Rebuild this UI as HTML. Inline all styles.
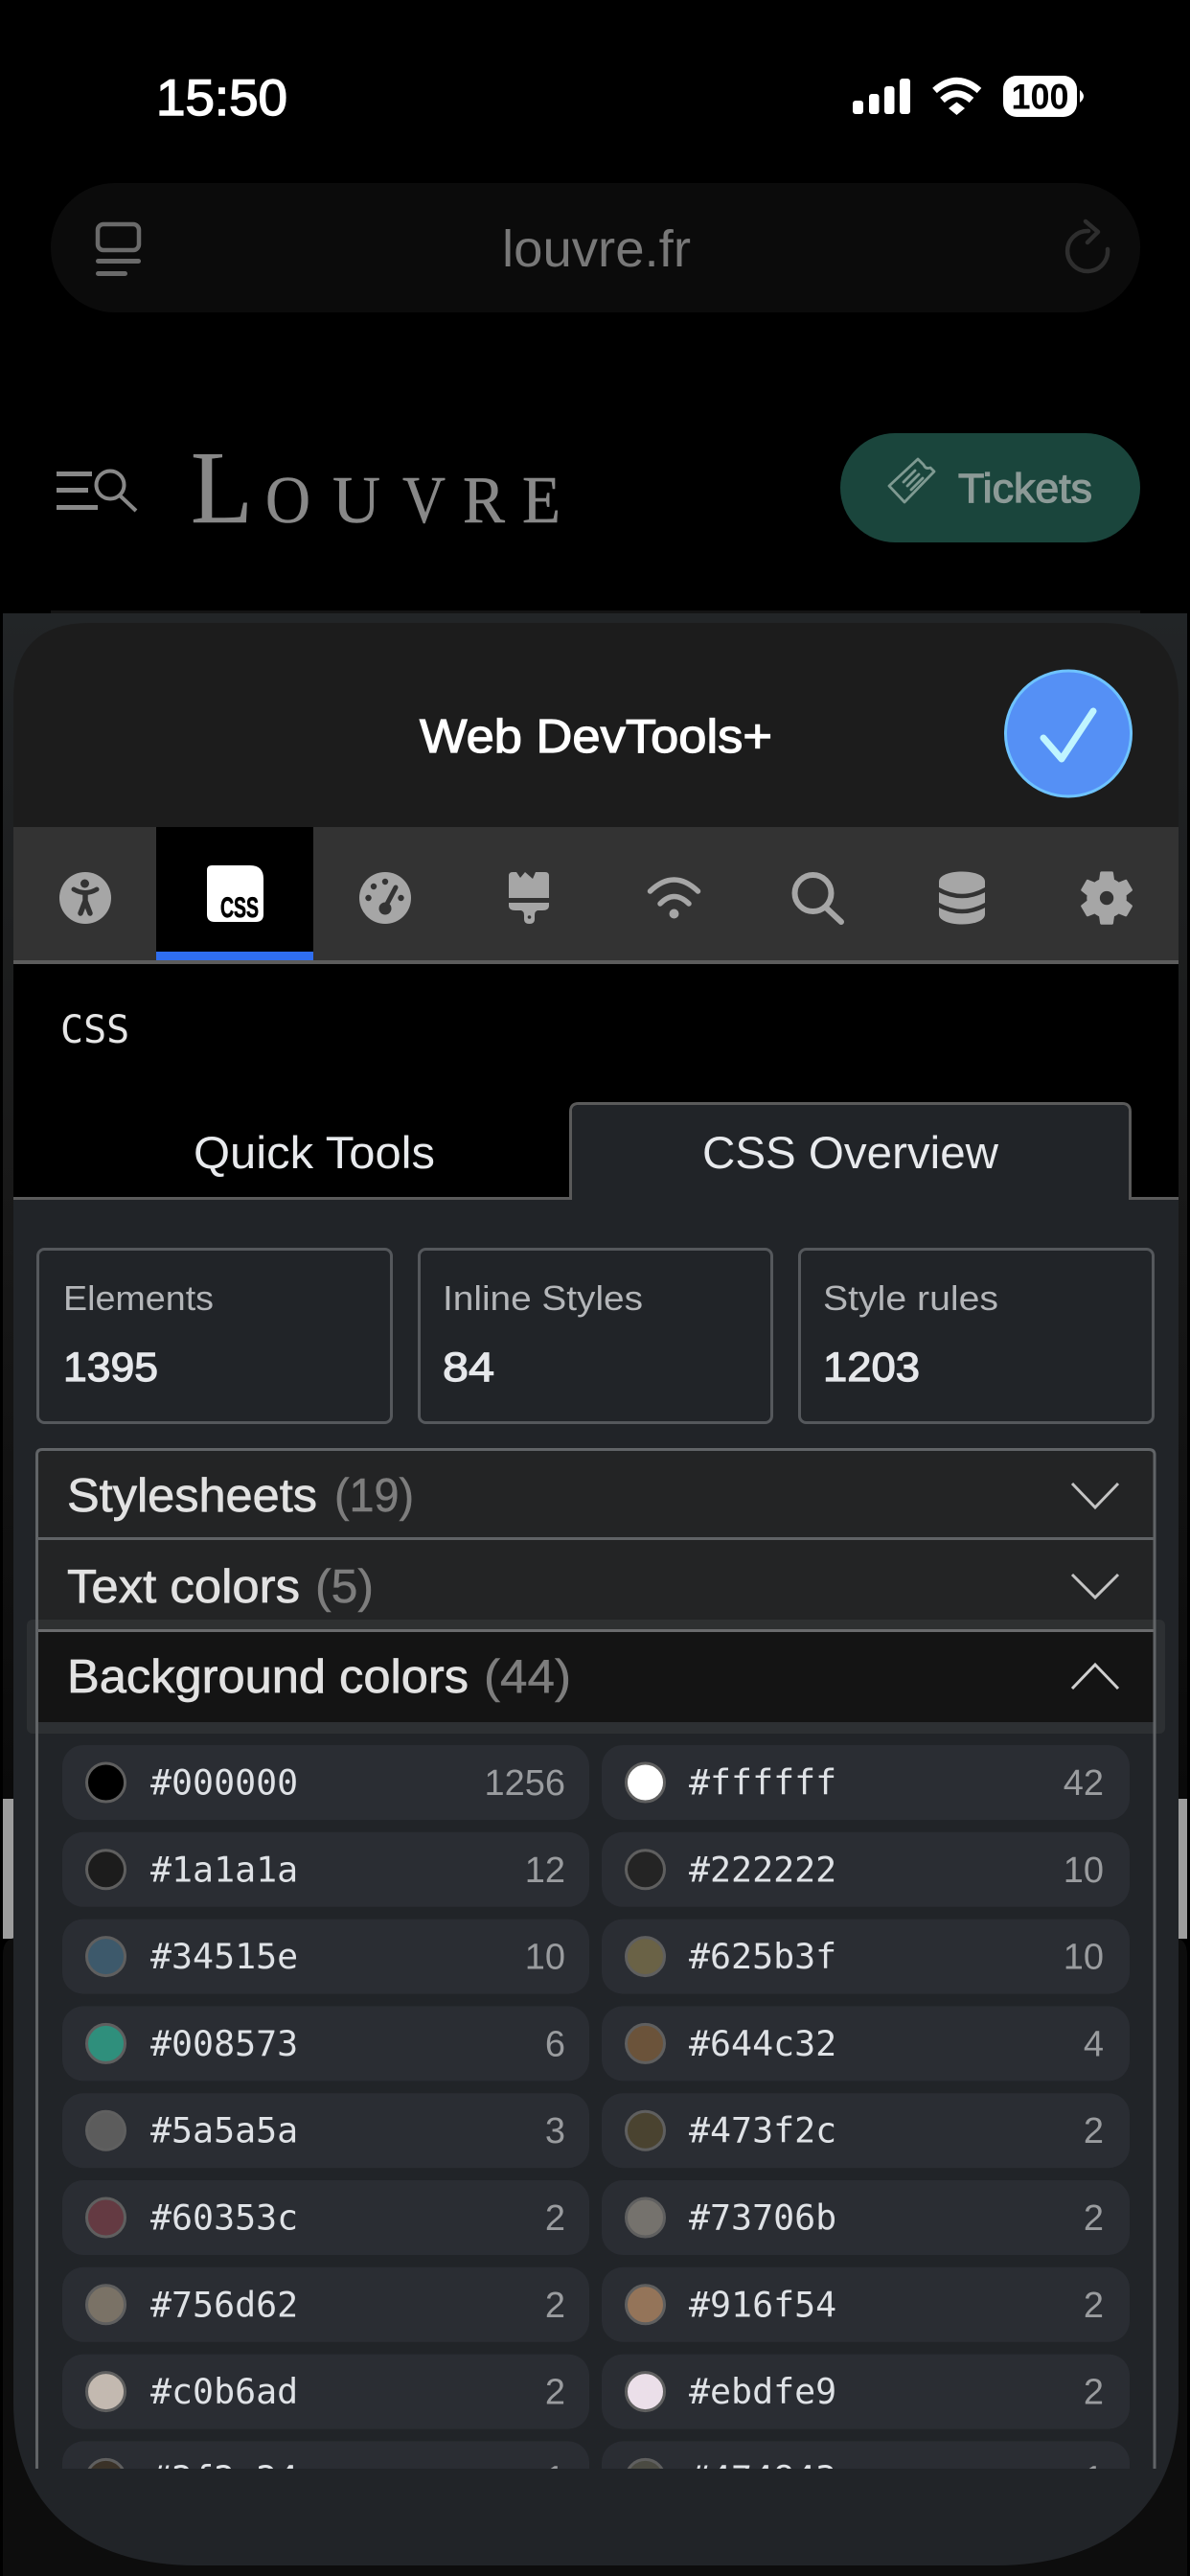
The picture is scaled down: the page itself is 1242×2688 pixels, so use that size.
<!DOCTYPE html>
<html><head><meta charset="utf-8"><title>Web DevTools+</title>
<style>
html,body{margin:0;padding:0;background:#000;width:1242px;height:2688px;overflow:hidden}
svg{display:block}
.s{font-family:"Liberation Sans",sans-serif}
.m{font-family:"DejaVu Sans Mono","Liberation Mono",monospace;font-size:36.6px;fill:#dfe2e6}
.c{font-family:"Liberation Sans",sans-serif;font-size:38px;fill:#9a9c9f;text-anchor:end}
.h{font-family:"Liberation Sans",sans-serif;font-size:49px;fill:#e2e2e2;stroke:#e2e2e2;stroke-width:.7}
.n{font-family:"Liberation Sans",sans-serif;font-size:49px;fill:#7d7d7d;stroke:#7d7d7d;stroke-width:.5}
.l{font-family:"Liberation Sans",sans-serif;font-size:36px;fill:#b4b6b9}
.v{font-family:"Liberation Sans",sans-serif;font-size:43px;fill:#e6e8eb;stroke:#e6e8eb;stroke-width:1.2}
.g{font-family:"Liberation Serif",serif;fill:#888;stroke:#888;stroke-width:.5}
</style></head><body>
<svg xmlns="http://www.w3.org/2000/svg" width="1242" height="2688" viewBox="0 0 1242 2688">
<defs>
<linearGradient id="edge" x1="0" y1="640" x2="0" y2="1877" gradientUnits="userSpaceOnUse"><stop offset="0" stop-color="#222527"/><stop offset=".45" stop-color="#1a1a1a"/><stop offset="1" stop-color="#0a0a0a"/></linearGradient>
<clipPath id="sheet"><path d="M94 650H1150Q1230 650 1230 730V2507C1230 2620 1150 2677 1040 2677H204C94 2677 14 2620 14 2507V730Q14 650 94 650Z"/></clipPath>
<clipPath id="rows"><rect x="40" y="1800" width="1164" height="776"/></clipPath>
</defs>
<rect width="1242" height="2688" fill="#000"/>

<!-- status bar -->
<text class="s" x="163" y="120" font-size="53" fill="#fff" stroke="#fff" stroke-width="1.500" textLength="137" lengthAdjust="spacingAndGlyphs">15:50</text>
<g fill="#fff">
<rect x="890" y="105" width="11" height="14" rx="3"/><rect x="907" y="98" width="10.500" height="21" rx="3"/><rect x="923" y="90" width="10.500" height="29" rx="3"/><rect x="939" y="82" width="11" height="37" rx="3"/>
<path d="M990 113L998.500 106.500L1007 113L998.500 120Z"/>
<rect x="1047" y="79" width="77" height="43" rx="14"/>
<path d="M1127 94Q1131 97 1131 100.500Q1131 104 1127 107Z"/>
</g>
<g fill="none" stroke="#fff" stroke-width="7"><path d="M975.500 94.500Q998.500 74 1022 94.500"/><path d="M983.500 104.500Q998.500 91 1014 104.500"/></g>
<text class="s" x="1085.500" y="113.500" font-size="37" font-weight="bold" fill="#000" text-anchor="middle" textLength="60" lengthAdjust="spacingAndGlyphs">100</text>

<!-- url bar -->
<rect x="53" y="191" width="1137" height="135" rx="67" fill="#0b0b0b"/>
<rect x="102" y="234" width="43" height="27" rx="6" fill="none" stroke="#6a6a6a" stroke-width="4.500"/>
<rect x="100" y="270" width="47" height="5" rx="2.500" fill="#6a6a6a"/><rect x="100" y="283" width="33" height="5" rx="2.500" fill="#6a6a6a"/>
<text class="s" x="524" y="278" font-size="54" fill="#787878" textLength="197" lengthAdjust="spacingAndGlyphs">louvre.fr</text>
<g fill="none" stroke="#2e2e2e" stroke-width="4.500" stroke-linecap="round" stroke-linejoin="round"><path d="M1156 260A21 21 0 1 1 1136 241"/><path d="M1133 231L1146 242L1135 253"/></g>

<!-- site header -->
<g fill="#888"><rect x="59" y="492" width="37" height="5"/><rect x="59" y="509" width="33" height="5"/><rect x="59" y="527" width="43" height="5"/></g>
<g fill="none" stroke="#888" stroke-width="4"><circle cx="115" cy="506" r="14.500"/><path d="M125 517L142 533"/></g>
<g class="g">
<text x="199" y="545" font-size="108" textLength="65" lengthAdjust="spacingAndGlyphs">L</text>
<text x="277" y="545" font-size="70" textLength="47" lengthAdjust="spacingAndGlyphs">O</text>
<text x="347" y="545" font-size="70" textLength="50" lengthAdjust="spacingAndGlyphs">U</text>
<text x="420" y="545" font-size="70" textLength="45" lengthAdjust="spacingAndGlyphs">V</text>
<text x="483" y="545" font-size="70" textLength="44" lengthAdjust="spacingAndGlyphs">R</text>
<text x="545" y="545" font-size="70" textLength="40" lengthAdjust="spacingAndGlyphs">E</text>
</g>
<rect x="877" y="452" width="313" height="114" rx="57" fill="#1a453c"/>
<g fill="none" stroke="#7f9a92" stroke-width="2.800" stroke-linejoin="round" stroke-linecap="round"><path d="M928 507L958 479L964 485Q966 490 971 488L975 492L944 524Z"/><path d="M943 503L955 491M947 507L959 495M951 511L963 499"/></g>
<text class="s" x="1000" y="524" font-size="43" fill="#8c9a97" stroke="#8c9a97" stroke-width="1.200" textLength="140" lengthAdjust="spacingAndGlyphs">Tickets</text>

<!-- behind sheet -->
<rect x="53" y="637" width="1137" height="3" fill="#141414"/>
<rect x="3" y="640" width="1236" height="1382" fill="url(#edge)"/>
<rect x="3" y="1877" width="11" height="146" fill="#9c9c9c"/>
<rect x="1230" y="1877" width="9" height="146" fill="#9c9c9c"/>
<path d="M3 2688V2040Q3 2022 18 2022H1224Q1239 2022 1239 2040V2688Z" fill="#0d0d0d"/>

<!-- sheet -->
<g clip-path="url(#sheet)">
<rect x="14" y="650" width="1216" height="2027" fill="#212428"/>
<rect x="14" y="650" width="1216" height="213" fill="#1c1c1c"/>
<rect x="14" y="863" width="1216" height="139" fill="#333"/>
<rect x="14" y="1002" width="1216" height="4" fill="#5c5c5c"/>
<rect x="14" y="1006" width="1216" height="244" fill="#000"/>
<rect x="163" y="863" width="164" height="130" fill="#000"/>
<rect x="163" y="993" width="164" height="9" fill="#2f6ef0"/>
</g>

<!-- head -->
<text class="s" x="438" y="785" font-size="49" fill="#fff" stroke="#fff" stroke-width="1.200" textLength="368" lengthAdjust="spacingAndGlyphs">Web DevTools+</text>
<circle cx="1115" cy="765.500" r="65.500" fill="#5590f5" stroke="#6ec3ff" stroke-width="3"/>
<path d="M1089 770L1108 792L1141 742" fill="none" stroke="#c0f5ff" stroke-width="7" stroke-linecap="round" stroke-linejoin="round"/>

<!-- tab icons -->
<circle cx="89" cy="937" r="27" fill="#a6a6a6"/>
<circle cx="88.500" cy="922" r="4.500" fill="#333"/>
<path d="M77 928Q89 935 101 928" fill="none" stroke="#333" stroke-width="5" stroke-linecap="round"/>
<path d="M89 932V941M89 940L84 953M89 940L94 953" fill="none" stroke="#333" stroke-width="5.500" stroke-linecap="round"/>

<path d="M216 908Q216 903 221 903H261Q275 903 275 917V954Q275 962 267 962H224Q216 962 216 954Z" fill="#fff"/>
<text class="s" x="230" y="957" font-size="30" font-weight="bold" fill="#000" stroke="#000" stroke-width=".7" textLength="40" lengthAdjust="spacingAndGlyphs">CSS</text>

<circle cx="402" cy="937" r="27" fill="#a6a6a6"/>
<g fill="#333"><circle cx="390" cy="925" r="3.200"/><circle cx="402" cy="920" r="3.200"/><circle cx="384.500" cy="937" r="3.200"/><circle cx="418.500" cy="937" r="3.200"/><circle cx="402" cy="948" r="6.500"/></g>
<path d="M403 945L413 926" stroke="#333" stroke-width="5" stroke-linecap="round"/>

<g fill="#a6a6a6">
<path d="M531 914Q531 910 535 910H539L543 916L548 910L556 917L559 910H569Q573 910 573 914V937H531Z"/>
<path d="M531 942H573V945Q573 950 566 950H561Q558 951 558 955V959Q558 964 552.500 964Q547 964 547 959V955Q547 951 544 950H538Q531 950 531 945Z"/>
</g>
<circle cx="552.500" cy="957" r="1.800" fill="#333"/>

<g fill="none" stroke="#a6a6a6" stroke-width="5.500" stroke-linecap="round"><path d="M678.500 930Q703.500 906 728.500 930"/><path d="M689 943Q703.500 928 719 943"/></g>
<circle cx="703.500" cy="953.500" r="5" fill="#a6a6a6"/>

<g fill="none" stroke="#a6a6a6" stroke-width="6" stroke-linecap="round"><circle cx="848.500" cy="932" r="19"/><path d="M862 947L878 962"/></g>

<path d="M980 920C980 906 1028 906 1028 920V954C1028 968 980 968 980 954Z" fill="#a6a6a6"/>
<path d="M979 928Q1004 942 1029 928M979 944Q1004 958 1029 944" fill="none" stroke="#333" stroke-width="4.500"/>

<g transform="translate(1120.500 902.500) scale(2.880 2.880)"><path fill="#a6a6a6" d="M19.140 12.940c.040-.300.060-.610.060-.940 0-.320-.020-.640-.070-.940l2.030-1.580a.490.490 0 0 0 .120-.610l-1.920-3.320a.488.488 0 0 0-.590-.220l-2.390.960c-.500-.380-1.030-.700-1.620-.940l-.360-2.540a.484.484 0 0 0-.480-.410h-3.840c-.240 0-.430.170-.470.410l-.360 2.540c-.590.240-1.130.570-1.620.940l-2.390-.960c-.220-.080-.470 0-.590.220L2.740 8.870c-.120.210-.080.470.120.610l2.030 1.580c-.050.300-.090.630-.090.940s.020.640.070.940l-2.030 1.580a.490.490 0 0 0-.120.610l1.920 3.320c.120.220.370.290.590.220l2.390-.960c.500.380 1.030.700 1.620.940l.360 2.540c.050.240.240.410.480.410h3.840c.240 0 .440-.170.470-.410l.360-2.540c.590-.240 1.130-.560 1.620-.940l2.390.960c.220.080.470 0 .590-.220l1.920-3.320c.120-.220.070-.470-.120-.610l-2.010-1.580z"/><circle cx="12" cy="12" r="2.500" fill="#333"/></g>

<!-- section title -->
<text x="63" y="1088" font-family="DejaVu Sans Mono, monospace" font-size="40" fill="#e6e6e6">CSS</text>

<!-- tabs -->
<rect x="596" y="1248" width="583" height="6" fill="#212428"/>
<path d="M14 1250.500H595.500V1160Q595.500 1151.500 604 1151.500H1171Q1179.500 1151.500 1179.500 1160V1250.500H1230" fill="none" stroke="#5a5a5a" stroke-width="3"/>
<path d="M597 1250V1160Q597 1153 604 1153H1171Q1178 1153 1178 1160V1250Z" fill="#212428"/>
<text class="s" x="202" y="1219" font-size="47.500" fill="#e8eaed" textLength="252" lengthAdjust="spacingAndGlyphs">Quick Tools</text>
<text class="s" x="733" y="1219" font-size="47.500" fill="#e8eaed" textLength="309" lengthAdjust="spacingAndGlyphs">CSS Overview</text>

<!-- stats -->
<g fill="none" stroke="#55585c" stroke-width="3">
<rect x="39.500" y="1303.500" width="369" height="181" rx="7"/>
<rect x="437.500" y="1303.500" width="368" height="181" rx="7"/>
<rect x="834.500" y="1303.500" width="369" height="181" rx="7"/>
</g>
<text class="l" x="66" y="1367" textLength="157" lengthAdjust="spacingAndGlyphs">Elements</text>
<text class="l" x="462" y="1367" textLength="209" lengthAdjust="spacingAndGlyphs">Inline Styles</text>
<text class="l" x="859" y="1367" textLength="183" lengthAdjust="spacingAndGlyphs">Style rules</text>
<text class="v" x="66" y="1441" textLength="99" lengthAdjust="spacingAndGlyphs">1395</text>
<text class="v" x="462" y="1441" textLength="54" lengthAdjust="spacingAndGlyphs">84</text>
<text class="v" x="859" y="1441" textLength="101" lengthAdjust="spacingAndGlyphs">1203</text>

<!-- accordion -->
<path d="M38.500 2576V1518Q38.500 1512.500 44 1512.500H1199Q1204.500 1512.500 1204.500 1518V1700H38.500Z" fill="#232425"/>
<path d="M38.500 2576V1518Q38.500 1512.500 44 1512.500H1199Q1205 1512.500 1205 1518V2576" fill="none" stroke="#616467" stroke-width="3"/>
<rect x="40" y="1604" width="1164" height="3" fill="#5f6265"/>
<text class="h" x="70" y="1577" textLength="261" lengthAdjust="spacingAndGlyphs">Stylesheets</text>
<text class="n" x="349" y="1577" textLength="83" lengthAdjust="spacingAndGlyphs">(19)</text>
<path d="M1119 1548L1143 1573L1167 1548" fill="none" stroke="#c4c4c4" stroke-width="3"/>
<text class="h" x="70" y="1672" textLength="243" lengthAdjust="spacingAndGlyphs">Text colors</text>
<text class="n" x="329" y="1672" textLength="61" lengthAdjust="spacingAndGlyphs">(5)</text>
<path d="M1119 1643L1143 1667L1167 1643" fill="none" stroke="#c4c4c4" stroke-width="3"/>

<rect x="28" y="1690" width="1188" height="119" rx="6" fill="#36383b" fill-opacity=".6"/>
<rect x="40" y="1700" width="1164" height="3" fill="#6a6b6d"/>
<rect x="40" y="1703" width="1164" height="94" fill="#141414"/>
<path d="M38.500 1690V2576M1205 1690V2576" stroke="#616467" stroke-width="3" fill="none"/>
<text class="h" x="70" y="1766" textLength="419" lengthAdjust="spacingAndGlyphs">Background colors</text>
<text class="n" x="505" y="1766" textLength="91" lengthAdjust="spacingAndGlyphs">(44)</text>
<path d="M1119 1762L1143 1737L1167 1762" fill="none" stroke="#d0d0d0" stroke-width="3"/>

<!-- colour rows -->
<g clip-path="url(#rows)">
<g fill="#2a2d33">
<rect x="65" y="1821" width="550" height="78" rx="22"/><rect x="628" y="1821" width="551" height="78" rx="22"/>
<rect x="65" y="1911.800" width="550" height="78" rx="22"/><rect x="628" y="1911.800" width="551" height="78" rx="22"/>
<rect x="65" y="2002.600" width="550" height="78" rx="22"/><rect x="628" y="2002.600" width="551" height="78" rx="22"/>
<rect x="65" y="2093.400" width="550" height="78" rx="22"/><rect x="628" y="2093.400" width="551" height="78" rx="22"/>
<rect x="65" y="2184.200" width="550" height="78" rx="22"/><rect x="628" y="2184.200" width="551" height="78" rx="22"/>
<rect x="65" y="2275" width="550" height="78" rx="22"/><rect x="628" y="2275" width="551" height="78" rx="22"/>
<rect x="65" y="2365.800" width="550" height="78" rx="22"/><rect x="628" y="2365.800" width="551" height="78" rx="22"/>
<rect x="65" y="2456.600" width="550" height="78" rx="22"/><rect x="628" y="2456.600" width="551" height="78" rx="22"/>
<rect x="65" y="2547.400" width="550" height="78" rx="22"/><rect x="628" y="2547.400" width="551" height="78" rx="22"/>
</g>
<g stroke="#5f5f5f" stroke-width="3">
<circle cx="110.500" cy="1860" r="20" fill="#000"/><circle cx="673.500" cy="1860" r="20" fill="#fff"/>
<circle cx="110.500" cy="1950.800" r="20" fill="#1c1c1c"/><circle cx="673.500" cy="1950.800" r="20" fill="#242424"/>
<circle cx="110.500" cy="2041.600" r="20" fill="#3d596b"/><circle cx="673.500" cy="2041.600" r="20" fill="#6a6246"/>
<circle cx="110.500" cy="2132.400" r="20" fill="#2f8f7c"/><circle cx="673.500" cy="2132.400" r="20" fill="#6b533a"/>
<circle cx="110.500" cy="2223.200" r="20" fill="#5c5c5c"/><circle cx="673.500" cy="2223.200" r="20" fill="#4a4330"/>
<circle cx="110.500" cy="2314" r="20" fill="#643a42"/><circle cx="673.500" cy="2314" r="20" fill="#75726d"/>
<circle cx="110.500" cy="2404.800" r="20" fill="#7a7266"/><circle cx="673.500" cy="2404.800" r="20" fill="#947459"/>
<circle cx="110.500" cy="2495.600" r="20" fill="#c3b9b0"/><circle cx="673.500" cy="2495.600" r="20" fill="#ebdfe9"/>
<circle cx="110.500" cy="2586.400" r="20" fill="#3a3228"/><circle cx="673.500" cy="2586.400" r="20" fill="#4a4a42"/>
</g>
<text class="m" x="157" y="1872.500">#000000</text><text class="c" x="590" y="1873">1256</text><text class="m" x="719" y="1872.500">#ffffff</text><text class="c" x="1152" y="1873">42</text>
<text class="m" x="157" y="1963.300">#1a1a1a</text><text class="c" x="590" y="1963.800">12</text><text class="m" x="719" y="1963.300">#222222</text><text class="c" x="1152" y="1963.800">10</text>
<text class="m" x="157" y="2054.100">#34515e</text><text class="c" x="590" y="2054.600">10</text><text class="m" x="719" y="2054.100">#625b3f</text><text class="c" x="1152" y="2054.600">10</text>
<text class="m" x="157" y="2144.900">#008573</text><text class="c" x="590" y="2145.400">6</text><text class="m" x="719" y="2144.900">#644c32</text><text class="c" x="1152" y="2145.400">4</text>
<text class="m" x="157" y="2235.700">#5a5a5a</text><text class="c" x="590" y="2236.200">3</text><text class="m" x="719" y="2235.700">#473f2c</text><text class="c" x="1152" y="2236.200">2</text>
<text class="m" x="157" y="2326.500">#60353c</text><text class="c" x="590" y="2327">2</text><text class="m" x="719" y="2326.500">#73706b</text><text class="c" x="1152" y="2327">2</text>
<text class="m" x="157" y="2417.300">#756d62</text><text class="c" x="590" y="2417.800">2</text><text class="m" x="719" y="2417.300">#916f54</text><text class="c" x="1152" y="2417.800">2</text>
<text class="m" x="157" y="2508.100">#c0b6ad</text><text class="c" x="590" y="2508.600">2</text><text class="m" x="719" y="2508.100">#ebdfe9</text><text class="c" x="1152" y="2508.600">2</text>
<text class="m" x="157" y="2598.900">#2f2a24</text><text class="c" x="590" y="2599.400">1</text><text class="m" x="719" y="2598.900">#474843</text><text class="c" x="1152" y="2599.400">1</text>
</g>
</svg>
</body></html>
